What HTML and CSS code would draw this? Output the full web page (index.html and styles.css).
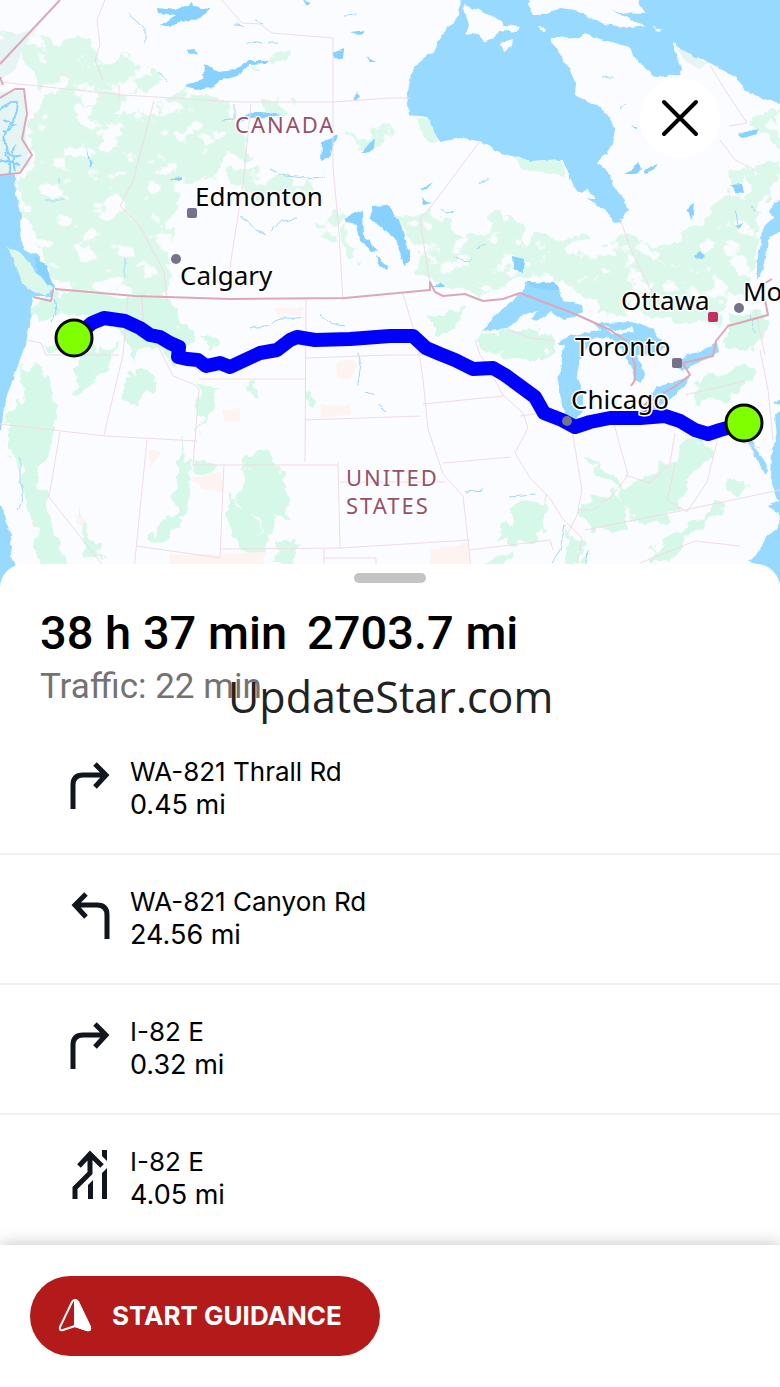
FILE: index.html
```html
<!DOCTYPE html>
<html lang="en">
<head>
<meta charset="utf-8">
<meta name="viewport" content="width=device-width, initial-scale=1">
<title>Route overview</title>
<link rel="stylesheet" href="styles.css">
</head>
<body>
<main class="screen">
  <section class="map" aria-label="Route map">
    <svg class="map-canvas" viewBox="0 0 780 590" preserveAspectRatio="xMidYMid slice">
      <defs>
        <filter id="coast" x="-5%" y="-5%" width="110%" height="110%">
          <feTurbulence type="fractalNoise" baseFrequency="0.12" numOctaves="2" seed="4"/>
          <feDisplacementMap in="SourceGraphic" scale="5" xChannelSelector="R" yChannelSelector="G"/>
        </filter>
        <filter id="woods" filterUnits="userSpaceOnUse" x="0" y="0" width="780" height="590">
          <feTurbulence type="fractalNoise" baseFrequency="0.045" numOctaves="4" seed="9" result="n"/>
          <feDisplacementMap in="SourceGraphic" in2="n" scale="30" xChannelSelector="R" yChannelSelector="G" result="d"/>
          <feTurbulence type="fractalNoise" baseFrequency="0.04 0.05" numOctaves="4" seed="21"/>
          <feColorMatrix values="0 0 0 0 0  0 0 0 0 0  0 0 0 0 0  16 0 0 0 -5.8" result="holes"/>
          <feComposite in="d" in2="holes" operator="in"/>
        </filter>
        <filter id="groves" filterUnits="userSpaceOnUse" x="0" y="0" width="780" height="590">
          <feTurbulence type="fractalNoise" baseFrequency="0.06" numOctaves="3" seed="3"/>
          <feDisplacementMap in="SourceGraphic" scale="26" xChannelSelector="R" yChannelSelector="G"/>
        </filter>
      </defs>
      <rect width="780" height="590" class="land"/>

      <g class="forest" filter="url(#woods)">
        <path d="M0 35L35 25 60 38 92 35 98 65 130 58 160 75 145 90 118 90 120 110 155 118 165 100 200 92 232 105 240 140 222 170 190 185 175 205 168 240 172 290 100 292 60 292 45 260 30 240 22 200 22 170 35 150 32 110 40 85 30 60Z"/>
        <path d="M255 55L288 50 280 65 258 70ZM265 100L300 103 298 115 265 116ZM230 175L260 168 310 180 320 198 240 196ZM315 222L340 210 335 240 315 235ZM345 220L352 250 342 250ZM345 258L370 260 362 268ZM352 135L390 128 388 148 355 150ZM225 130L252 140 245 160 228 155Z"/>
        <path d="M390 210L425 212 445 220 480 235 510 205 520 240 560 235 600 245 640 235 655 248 680 240 715 215 735 190 728 170 755 175 780 160 780 190 758 205 760 250 750 290 720 300 715 325 675 330 650 315 600 312 560 280 530 275 500 285 470 292 440 285 415 280 412 240Z"/>
        <path d="M755 120L780 110 780 150 765 142Z"/>
      </g>
      <path class="forest" filter="url(#coast)" d="M515 158L540 162 562 160 566 176 545 172 522 170ZM416 118L427 118 440 140 432 143 424 138Z"/>
      <g class="forest forest-south" filter="url(#groves)">
        <path d="M30 302L60 300 55 320 35 325ZM55 292L165 295 180 325 195 340 180 365 150 345 135 365 125 330 90 315 60 310ZM40 345L70 345 65 355 42 352ZM20 365L50 368 55 410 55 445 38 470 48 510 62 550 70 590 48 590 30 520 22 470 5 450 5 410 22 395ZM75 360L120 340 100 372 75 395ZM130 375L155 378 140 410 120 405ZM198 385L215 390 208 410 200 435ZM183 430L189 490 180 530 150 545 150 530 175 510ZM190 460L220 465 210 475 195 475ZM225 495L245 505 270 545 255 560 230 540ZM250 455L272 450 282 470 290 500 292 525 275 515 268 545 258 520 238 500ZM75 510L90 530 105 560 90 560ZM280 540L297 545 290 562 275 560ZM200 340L215 337 217 345 204 346ZM245 380L258 385 260 398 250 390ZM305 390L315 395 312 412 306 408Z"/>
        <path d="M425 318L460 310 455 330 430 330ZM475 335L540 325 560 345 530 360 480 350ZM510 510L545 500 548 530 520 545 490 545 505 530ZM485 560L510 550 500 572 485 575ZM575 510L610 490 630 505 625 530 590 530ZM590 460L620 475 630 490 605 480ZM620 490L660 470 690 440 710 450 690 490 665 520 640 530ZM650 550L700 520 715 500 730 505 690 535 670 562 650 562ZM725 310L770 320 755 350 725 345ZM700 380L760 365 740 395 690 405ZM725 480L750 478 740 495 725 495ZM565 530L585 540 580 580 568 570Z"/>
      </g>
      <g class="desert" filter="url(#coast)">
        <path d="M275 308L305 307 300 316 275 315ZM337 360L358 362 350 380 338 378ZM320 405L350 405 350 415 322 418ZM222 410L240 408 240 420 225 422ZM190 478L220 472 225 492 205 490ZM170 555L265 552 260 590 175 590ZM430 550L468 542 472 590 430 590ZM148 450L162 452 150 468ZM75 515L88 520 80 526Z"/>
      </g>
      <path class="tundra" d="M0 40L30 30 15 70 0 80ZM676 47L706 63 700 70 684 60ZM0 92L24 90 26 135 30 165 15 175 0 173Z"/>

      <g class="water" filter="url(#coast)">
        <path d="M460-10L459 15 442 35 435 50 418 62 411 75 407 95 409 115 427 117 433 128 440 142 460 138 480 141 500 153 520 158 530 162 563 160 567 172 576 190 588 200 605 210 615 223 620 222 627 210 625 200 614 187 611 175 597 162 605 155 612 145 614 130 610 118 600 107 575 95 576 82 570 68 562 62 560 52 551 42 551 38 582 37 585 33 600 39 630 47 633 55 645 68 655 77 680 75 682 68 674 50 673 42 685 52 710 63 735 77 745 90 760 97 775 103 795 106 795-10Z"/>
        <path d="M-10 173L15 175 16 195 22 215 20 240 24 250 38 255 44 270 55 287 52 297 33 297 31 302 30 325 25 345 15 375 5 400 1 430-10 430ZM-10 500L3 507 5 520 12 535 10 555 17 570 22 600-10 600Z"/>
        <path d="M795 192L772 203 770 213 774 217 762 228 761 243 757 262 757 280 765 265 768 240 795 220ZM795 395L774 402 784 408 775 415 777 440 772 450 771 480 778 500 768 505 779 513 778 528 766 537 760 550 748 562 762 566 795 600ZM748 440L754 455 760 465 765 475 769 470 760 455 752 442Z"/>
        <path d="M482 332L493 317 523 291 525 282 542 283 560 291 563 301 582 305 583 312 573 318 563 320 550 312 537 322 531 320 538 310 523 315 507 329Z"/>
        <path d="M558 343L573 335 603 330 608 338 592 339 584 350 579 365 577 375 583 390 583 410 575 420 568 418 562 405 558 380 562 358 564 345ZM593 323L637 322 653 330 667 347 657 353 636 355 646 373 641 383 635 380 630 365 622 350 607 336ZM675 367L687 355 700 351 717 343 719 353 700 362 682 370ZM640 410L657 387 690 377 683 388 667 402 648 412Z"/>
      </g>
      <g class="land" filter="url(#coast)">
        <path d="M463 5L478 10 490 15 505 25 520 27 517 32 500 30 494 38 484 42 478 33 465 35 469 25ZM500 43L513 39 512 46 503 52ZM530-8L636-8 644 14 620 13 610 10 646 26 630 28 605 24 590 17 575 10 560 8 550 14 533 14 528 5ZM538 27L546 28 545 31 539 30ZM578 195L586 190 597 196 596 199 582 198ZM604 326L615 331 632 327 634 332 612 334ZM654 27L662 30 658 32Z"/>
      </g>
      <path class="forest island" filter="url(#coast)" d="M8 247L20 252 35 270 52 289 46 297 34 292 22 284Z"/>

      <g class="lake" filter="url(#coast)">
        <path d="M157 8L175 10 192 3 193 7 211 9 200 18 180 22 170 27 161 25 176 15 158 13ZM187 50L194 49 197 54 190 55ZM185 85L192 83 203 80 204 63 218 72 235 70 250 60 268 60 266 63 250 64 238 76 222 80 210 88 196 90ZM332 53L344 48 343 59 334 58ZM366 56L376 61 370 61ZM353 101L357 91 360 98ZM322 142L337 135 332 150 328 158 321 161ZM240 122L250 112 262 112 282 115 268 117 250 118ZM361 153L375 137 374 148 366 153ZM344 218L362 210 363 238 368 240 378 252 372 251 359 240 356 224 346 222ZM372 206L388 205 400 222 408 250 402 260 396 240 370 218ZM376 256L388 266 386 270 378 264ZM402 246L409 250 409 262 403 265ZM34 257L44 262 54 286 48 286 38 272ZM512 256L524 259 524 272 513 269ZM526 282L555 283 560 290 540 290ZM730 185L742 184 744 193 736 192ZM738 134L758 128 757 134 743 138ZM686 209L694 204 692 220 689 214ZM624 174L632 170 638 163 641 168 636 174ZM643 170L658 164 654 170 645 173ZM631 125L639 127 636 128ZM420 190L433 182 427 189ZM421 199L432 202 423 204ZM695 256L700 252 705 258 700 259ZM433 288L445 288 440 282ZM734 225L745 223 738 228ZM170 178L183 177 183 180 172 180ZM350 32L366 30 360 35ZM303 0L312 3 307 6ZM86 148L92 165 90 168Z"/>
      </g>
      <g class="stream" filter="url(#coast)">
        <path class="inlet" d="M0 110q12-10 16-8t-3 20q-12 12-7 25t15 8M3 120l12 5-12 8M5 150q8 15 4 25M15 145q-5 10 0 25M0 160l20 5"/>
        <path d="M128 14l17 15v14M246 45l8-4 8 2M255 20l8 3M268 43h10M345 15l12-1M235 25l10 1M158 72l9 10M270 170l15 5 20 2q10 4 20-1M240 216l12 9 5 6 10 4M270 231l12-11 15-1M234 104v15l-12 1M60 178v5M45 200h20M125 258v20M250 328l20-3q5-8 15-7t20-1M320 315q8 5 10 8l14 3M358 352l3 12-3 20M365 392l10 4M378 403l8 10M20 457v25q5 10 2 20l-5 8M55 298l2 12-5 13M455 256q8 10 17 3M476 248l10-4M600 77l14-1M620 109l5-4M480 184l8-5M440 209l8 4 6-2M752 205l3 7M735 210l4 17M750 315l5 18M465 492l18-2M510 497l25-2M587 550l-2 25M565 525l-5 25-8 12"/>
      </g>

      <g class="border">
        <path d="M0 82l123 13 115 7h95l57-4h20M222 0l20 23 18 1 12 9 61 5v130l6 63 4 70M154 101l-21 80-13 25 20 20 10 20 14 25 3 30M251 104l-8 80-14 89M105 0l-8 20 3 25-5 15 8 20M480 141l-47 63-13 15 10 65M620 218l10 30 25 50M119 85v14"/>
        <path d="M26 340l15 3 5 12h73M128 295l-5 60-12 50-7 30M0 424l105 12 92 5M60 432l-11 65 55 70M147 440l-13 130M142 296l1 25 15 25 15 30 20 8 6 5-4 52-2 24h144M199 379h106M306 299l-1 163M306 358l84-3h33M305 420l115-4M224 463l-4 95-84-12M338 462l2 86-120 1M340 548l130-8M324 549v20M323 558h53v12M340 482h105M403 294l15 50 5 35 5 50 15 45 20 22 10 90M423 404l80-8M443 463l68-6M470 550l80-10 3 10M520 416l40-6M495 380l8 15 20 18 5 15-13 25 15 25 20 20 12 20 20 20-5 25M475 340l5 15 15 20M510 330l20 8 25 3M572 430l10 60-5 25-10 20M613 420l15 55-15 20-20 15-15 0M625 475l25 8 20-20 5-30M675 465l-8 35 20 12 20-30 10-40M585 530l100-20 95-20M640 563l55-22 45 5M685 395l60-14M760 350l8 40 5 50M735 440l25 8M755 310l10 45M710 65l15 25 22 33-18 3M720 140l15 20 20 10"/>
      </g>
      <g class="frontier">
        <path d="M60 0L0 64M0 77l3 8M0 98l15-9 9 0 3 25-5 25 10 16-12 18-20 2M33 297l18 4 2-11M55 289l80 7 95 3 115-1 85-8 0-8 5 10 8 4 22-2 10 4 8 3 20-2 17-6 55 21 20 9 15 7 15 10 10 25 0 15-4 6M642 406l35-21 13-10-7-12 30-7 3-15 12-15 40-11-6-30 10-6"/>
      </g>

      <path class="route" d="M74 338L92 323 104 318 125 321 140 328 150 335 160 337 170 343 179 347 178 357 187 359 198 360 206 366 220 363 230 367 245 360 260 353 277 350 290 340 297 337 315 340 350 339 390 336 413 336 426 348 440 354 455 360 473 369 493 368 505 375 520 386 535 397 544 413 562 420 575 427 590 422 610 418 640 418 665 416 680 421 695 430 708 434 720 430 745 423"/>
      <g class="endpoint"><circle cx="74" cy="338" r="18"/><circle cx="744" cy="423" r="18"/></g>

      <g class="town">
        <rect x="187" y="208" width="10" height="10" rx="2"/>
        <circle cx="176" cy="259" r="5"/>
        <rect x="672" y="358" width="10" height="10" rx="2"/>
        <circle cx="739" cy="308" r="5"/>
        <circle cx="567" cy="421" r="5"/>
        <rect class="capital" x="708" y="312" width="10" height="10" rx="2"/>
      </g>
      <g class="city">
        <text x="195" y="206">Edmonton</text>
        <text x="180" y="285">Calgary</text>
        <text x="621" y="310">Ottawa</text>
        <text x="743" y="301">Mo</text>
        <text x="575" y="356">Toronto</text>
        <text x="571" y="409">Chicago</text>
      </g>
      <g class="country">
        <text x="235" y="133">CANADA</text>
        <text x="346" y="486">UNITED</text>
        <text x="346" y="514">STATES</text>
      </g>
    </svg>
    <button class="close" type="button" aria-label="Close">
      <svg viewBox="0 0 80 80"><path d="M24 24L56 56M56 24L24 56"/></svg>
    </button>
  </section>

  <section class="sheet">
    <div class="handle"></div>
    <header class="summary">
      <h1 class="totals"><span>38 h 37 min</span><span>2703.7 mi</span></h1>
      <p class="traffic">Traffic: 22 min</p>
      <span class="watermark">UpdateStar.com</span>
    </header>
    <ol class="steps">
      <li class="step">
        <svg class="step-icon" viewBox="0 0 48 50"><path d="M7 49V25Q7 15 17 15H40M29 4L40 15 29 27"/></svg>
        <div class="step-text"><p class="road">WA-821 Thrall Rd</p><p class="distance">0.45 mi</p></div>
      </li>
      <li class="step">
        <svg class="step-icon" viewBox="0 0 48 50"><path d="M41 49V25Q41 15 31 15H8M20 4L9 15 20 27"/></svg>
        <div class="step-text"><p class="road">WA-821 Canyon Rd</p><p class="distance">24.56 mi</p></div>
      </li>
      <li class="step">
        <svg class="step-icon" viewBox="0 0 48 50"><path d="M7 49V25Q7 15 17 15H40M29 4L40 15 29 27"/></svg>
        <div class="step-text"><p class="road">I-82 E</p><p class="distance">0.32 mi</p></div>
      </li>
      <li class="step">
        <svg class="step-icon" viewBox="0 0 48 50"><path d="M9 49V38L24 23V5M13 16L24 4 36 16"/><path class="solid" d="M22 35L27 30V49H22ZM36 0H41V11L36 6ZM36 23L41 18V49H36Z"/></svg>
        <div class="step-text"><p class="road">I-82 E</p><p class="distance">4.05 mi</p></div>
      </li>
    </ol>
  </section>

  <footer class="actions">
    <button class="start" type="button">
      <svg class="start-icon" viewBox="0 0 34 34"><path d="M17 2Q15 2 14 4L2 29Q1 33 5 32L17 28 29 32Q33 33 32 29L20 4Q19 2 17 2Z"/><path class="fill" d="M17 2V28L29 32Q33 33 32 29L20 4Q19 2 17 2Z"/></svg>
      START GUIDANCE
    </button>
  </footer>
</main>
</body>
</html>
```
FILE: styles.css
```css
* { box-sizing: border-box; }
body { margin: 0; background: #fff; color: #000; font-family: Inter, "Liberation Sans", sans-serif; }
h1, p, ol { margin: 0; padding: 0; }
.screen { display: flex; flex-direction: column; min-height: 100vh; overflow: hidden; }

.map { position: relative; }
.map-canvas { display: block; width: 100%; aspect-ratio: 780 / 590; }
.map-canvas filter { color-interpolation-filters: sRGB; }
.land { fill: #fbfcff; }
.forest { fill: #dcf8ea; }
.forest-south { fill: #d6f8e8; }
.desert { fill: #fdf4f2; }
.tundra { fill: #e6f5f4; }
.water { fill: #98daff; }
.lake { fill: #86d1ff; }
.stream { fill: none; stroke: #a0d6f2; stroke-width: 1; }
.inlet { stroke: #86d1ff; stroke-width: 2; }
.border { fill: none; stroke: #f0dbe3; stroke-width: 1; }
.frontier { fill: none; stroke: #dca8b8; stroke-width: 2; stroke-linejoin: round; }
.route { fill: none; stroke: #00f; stroke-width: 14; stroke-linecap: round; stroke-linejoin: round; }
.endpoint { fill: #80ff00; stroke: #080808; stroke-width: 3; }
.town { fill: #747389; }
.capital { fill: #c03060; }
.city { font: 26px "Noto Sans", sans-serif; fill: #050505; stroke: #fff; stroke-width: 3; stroke-linejoin: round; paint-order: stroke; }
.country { font: 22px "Noto Sans", sans-serif; letter-spacing: 2px; fill: #96506a; stroke: #fff; stroke-width: 2; paint-order: stroke; }

.close { position: absolute; top: 78px; right: 60px; width: 80px; height: 80px; padding: 0; border: 0; border-radius: 50%; background: #fff; cursor: pointer; }
.close svg { display: block; fill: none; stroke: #000; stroke-width: 4; stroke-linecap: round; }

.sheet { position: relative; flex: 1; margin-top: -26px; padding-top: 9px; background: #fff; border-radius: 24px 24px 0 0; }
.handle { width: 72px; height: 10px; margin: 0 auto; border-radius: 5px; background: #c4c4c4; }
.summary { position: relative; padding: 20px 40px 14px; }
.totals { display: flex; gap: 20px; font-family: Roboto, sans-serif; font-size: 47px; font-weight: 500; line-height: 60px; }
.traffic { font-family: Roboto, sans-serif; font-size: 35px; line-height: 48px; color: #737373; }
.watermark { position: absolute; left: 228px; top: 82px; font: 43px/64px "Open Sans", sans-serif; color: #222; }

.steps { list-style: none; }
.step { display: flex; gap: 16px; padding: 30px 66px 32px; border-bottom: 2px solid #f1f1f1; }
.step:last-child { border-bottom-color: transparent; }
.step-icon { width: 48px; height: 50px; margin-top: 5px; fill: none; stroke: #10151e; stroke-width: 5; }
.step-icon .solid { fill: #10151e; stroke: none; }
.step-text { line-height: 33px; }
.road { font-size: 26px; }
.distance { font-size: 27px; }

.actions { position: relative; padding: 31px 30px; background: #fff; box-shadow: 0 0 16px rgba(0, 0, 0, .25); }
.start { display: flex; align-items: center; gap: 20px; width: 350px; height: 80px; padding: 0 28px 2px; border: 0; border-radius: 40px; background: #b31a1a; color: #fff; font: 700 26px Inter, sans-serif; white-space: nowrap; cursor: pointer; }
.start-icon { width: 34px; height: 34px; fill: none; stroke: #fff; stroke-width: 2; stroke-linejoin: round; }
.start-icon .fill { fill: #fff; }
```
